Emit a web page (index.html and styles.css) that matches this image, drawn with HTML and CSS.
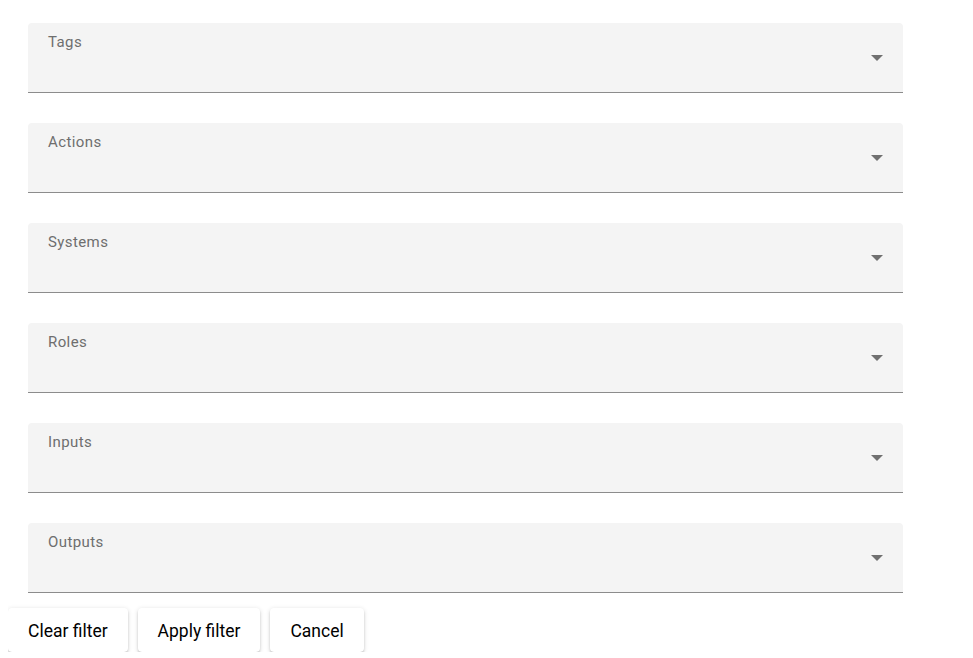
FILE: index.html
```html
<!DOCTYPE html>
<html>
<head>
<meta charset="utf-8">
<link rel="stylesheet" href="styles.css">
</head>
<body>
<div class="fields">
  <div class="field"><span class="label">Tags</span><span class="arrow"></span></div>
  <div class="field"><span class="label">Actions</span><span class="arrow"></span></div>
  <div class="field"><span class="label">Systems</span><span class="arrow"></span></div>
  <div class="field"><span class="label">Roles</span><span class="arrow"></span></div>
  <div class="field"><span class="label">Inputs</span><span class="arrow"></span></div>
  <div class="field"><span class="label">Outputs</span><span class="arrow"></span></div>
</div>
<div class="buttons">
  <button class="btn">Clear filter</button>
  <button class="btn">Apply filter</button>
  <button class="btn">Cancel</button>
</div>
</body>
</html>
```
FILE: styles.css
```css
body {
  margin: 8px;
  font-family: Roboto, "Liberation Sans", sans-serif;
  background: #fff;
}
.fields {
  display: flex;
  flex-direction: column;
  gap: 30px;
  padding: 15px 0 15px 20px;
  width: 875px;
}
.field {
  position: relative;
  height: 69px;
  background: #f4f4f4;
  border-bottom: 1px solid #8c8c8c;
  border-radius: 4px 4px 0 0;
  padding: 0 20px;
}
.label {
  display: block;
  padding-top: 11px;
  font-size: 15px;
  line-height: 17px;
  letter-spacing: 0.4px;
  color: #6e6e6e;
}
.arrow {
  position: absolute;
  right: 20px;
  top: 32px;
  width: 0;
  height: 0;
  border-left: 6px solid transparent;
  border-right: 6px solid transparent;
  border-top: 6px solid #707070;
}
.buttons {
  display: flex;
  gap: 10px;
}
.btn {
  font-family: Roboto, "Liberation Sans", sans-serif;
  font-size: 17.5px;
  color: #000;
  background: #fff;
  border: none;
  border-radius: 4px;
  height: 44px;
  padding: 2px 20px 0;
  box-shadow: 0 3px 1px -2px rgba(0,0,0,.22), 0 2px 2px 0 rgba(0,0,0,.16), 0 1px 5px 0 rgba(0,0,0,.14);
}
```
